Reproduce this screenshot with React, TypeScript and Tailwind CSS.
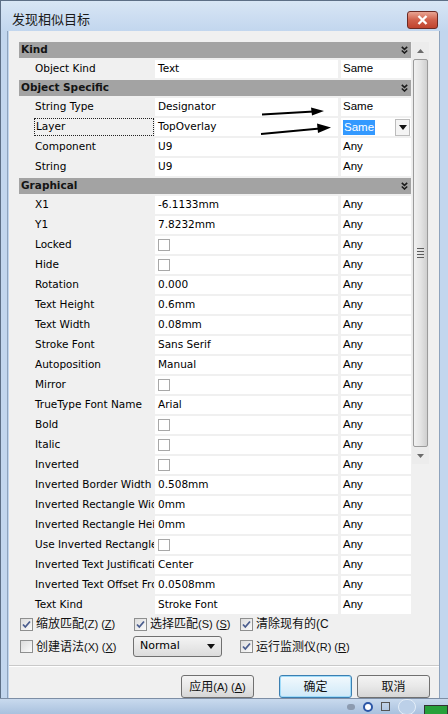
import type { ReactNode } from 'react';

// ── Data ──────────────────────────────────────────────────────────────────────

type Row = { name: string; value?: string; check?: boolean; match: string; focus?: boolean };
type Section = { title: string; rows: Row[] };

const sections: Section[] = [
  { title: 'Kind', rows: [{ name: 'Object Kind', value: 'Text', match: 'Same' }] },
  {
    title: 'Object Specific',
    rows: [
      { name: 'String Type', value: 'Designator', match: 'Same' },
      { name: 'Layer', value: 'TopOverlay', match: 'Same', focus: true },
      { name: 'Component', value: 'U9', match: 'Any' },
      { name: 'String', value: 'U9', match: 'Any' },
    ],
  },
  {
    title: 'Graphical',
    rows: [
      { name: 'X1', value: '-6.1133mm', match: 'Any' },
      { name: 'Y1', value: '7.8232mm', match: 'Any' },
      { name: 'Locked', check: true, match: 'Any' },
      { name: 'Hide', check: true, match: 'Any' },
      { name: 'Rotation', value: '0.000', match: 'Any' },
      { name: 'Text Height', value: '0.6mm', match: 'Any' },
      { name: 'Text Width', value: '0.08mm', match: 'Any' },
      { name: 'Stroke Font', value: 'Sans Serif', match: 'Any' },
      { name: 'Autoposition', value: 'Manual', match: 'Any' },
      { name: 'Mirror', check: true, match: 'Any' },
      { name: 'TrueType Font Name', value: 'Arial', match: 'Any' },
      { name: 'Bold', check: true, match: 'Any' },
      { name: 'Italic', check: true, match: 'Any' },
      { name: 'Inverted', check: true, match: 'Any' },
      { name: 'Inverted Border Width', value: '0.508mm', match: 'Any' },
      { name: 'Inverted Rectangle Width', value: '0mm', match: 'Any' },
      { name: 'Inverted Rectangle Height', value: '0mm', match: 'Any' },
      { name: 'Use Inverted Rectangle', check: true, match: 'Any' },
      { name: 'Inverted Text Justification', value: 'Center', match: 'Any' },
      { name: 'Inverted Text Offset From Border', value: '0.0508mm', match: 'Any' },
      { name: 'Text Kind', value: 'Stroke Font', match: 'Any' },
    ],
  },
];

const tahoma = "font-['DejaVu_Sans',sans-serif] text-[10.5px]";
const cjk = "font-['Liberation_Sans','Noto_Sans_CJK_SC',sans-serif]";

// ── Small drawings ────────────────────────────────────────────────────────────

function DoubleChevron() {
  return (
    <svg width="7" height="8" viewBox="0 0 7 8" className="shrink-0">
      <path d="M0.8 0.8 L3.5 3.3 L6.2 0.8 M0.8 4.5 L3.5 7 L6.2 4.5" fill="none" stroke="#1b1b1b" strokeWidth="1.6" />
    </svg>
  );
}

function WinCheck({ checked }: { checked: boolean }) {
  return (
    <div className="flex h-[13px] w-[13px] shrink-0 items-center justify-center border border-[#8e8f8f] bg-gradient-to-br from-[#dcdcdc] to-[#fbfbfb]">
      {checked && (
        <svg width="11" height="11" viewBox="0 0 11 11">
          <path d="M2 5.5 L4.3 8 L9 2.5" fill="none" stroke="#4a5d8e" strokeWidth="1.8" />
        </svg>
      )}
    </div>
  );
}

function Label({ children }: { children: ReactNode }) {
  return <span className={`${cjk} whitespace-nowrap text-[12px] text-[#111]`}>{children}</span>;
}

// ── Property grid ─────────────────────────────────────────────────────────────

function GridRow({ row }: { row: Row }) {
  return (
    <div className="flex h-[20px] py-px">
      <div className={`w-[135px] overflow-hidden whitespace-nowrap pl-[15px] ${tahoma} text-black`}>
        <div className={`flex h-full items-center pl-px ${row.focus ? 'border border-dotted border-[#222]' : ''}`}>
          {row.name}
        </div>
      </div>
      <div className={`ml-px flex w-[183px] items-center bg-white pl-[3px] ${tahoma} text-black`}>
        {row.check ? <div className="h-[12px] w-[12px] border border-[#a8a8a8] bg-white" /> : row.value}
      </div>
      {row.focus ? (
        <div className="ml-[3px] flex flex-1 items-center justify-between bg-white pl-[2px] pr-px">
          <span className="bg-[#3399ff] px-px font-['Liberation_Sans',sans-serif] text-[11.5px] leading-[15px] text-white">{row.match}</span>
          <div className="flex h-[17px] w-[15px] items-center justify-center border border-[#bcbcbc] bg-[#f4f4f4]">
            <svg width="8" height="5" viewBox="0 0 8 5">
              <path d="M0 0 H8 L4 5 Z" fill="#111" />
            </svg>
          </div>
        </div>
      ) : (
        <div className="ml-[3px] flex flex-1 items-center bg-white pl-[2px] font-['Liberation_Sans',sans-serif] text-[11.5px] text-black">
          {row.match}
        </div>
      )}
    </div>
  );
}

function Scrollbar() {
  return (
    <div className="flex w-[17px] flex-col bg-[#ececec]">
      <div className="flex h-[17px] items-center justify-center">
        <svg width="7" height="4" viewBox="0 0 7 4">
          <path d="M0 4 L3.5 0 L7 4 Z" fill="#6b6b6b" />
        </svg>
      </div>
      <div className="mx-px flex h-[388px] items-center justify-center rounded-[2px] border border-[#9b9b9b] bg-gradient-to-r from-[#f1f1f1] via-[#e4e4e4] to-[#cfcfcf]">
        <div className="flex flex-col gap-[2px]">
          <div className="h-px w-[7px] bg-[#5c5c5c]" />
          <div className="h-px w-[7px] bg-[#5c5c5c]" />
          <div className="h-px w-[7px] bg-[#5c5c5c]" />
          <div className="h-px w-[7px] bg-[#5c5c5c]" />
        </div>
      </div>
      <div className="flex-1" />
      <div className="flex h-[17px] items-center justify-center">
        <svg width="7" height="4" viewBox="0 0 7 4">
          <path d="M0 0 H7 L3.5 4 Z" fill="#6b6b6b" />
        </svg>
      </div>
    </div>
  );
}

function PropertyGrid() {
  return (
    <div className="flex h-[573px] gap-px overflow-hidden">
      <div className="w-[392px] overflow-hidden">
        {sections.map((s) => (
          <div key={s.title}>
            <div className="h-[18px] py-px">
              <div className="flex h-full items-center justify-between bg-[#a3a3a3] pl-[2px] pr-[3px]">
                <span className="font-['DejaVu_Sans',sans-serif] text-[10.5px] font-bold text-[#141414]">{s.title}</span>
                <DoubleChevron />
              </div>
            </div>
            {s.rows.map((r) => (
              <GridRow key={r.name} row={r} />
            ))}
          </div>
        ))}
      </div>
      <div className="pt-px">
        <Scrollbar />
      </div>
    </div>
  );
}

// ── Bottom area ───────────────────────────────────────────────────────────────

function Accel({ text, k }: { text: string; k: string }) {
  return (
    <Label>
      {text}
      <span className="text-[11px]">
        ({k}) (<span className="underline">{k}</span>)
      </span>
    </Label>
  );
}

function WinButton({ children, primary }: { children: ReactNode; primary?: boolean }) {
  return (
    <div
      className={`flex h-[23px] w-[73px] items-center justify-center rounded-[3px] border ${
        primary
          ? 'border-[#3c7fb1] bg-gradient-to-b from-[#f2f9fd] to-[#cfe9f8] shadow-[inset_0_0_0_1px_#9fdbf9]'
          : 'border-[#707070] bg-gradient-to-b from-[#f4f4f4] via-[#e8e8e8] to-[#d6d6d6]'
      }`}
    >
      <Label>{children}</Label>
    </div>
  );
}

export default function App() {
  return (
    <div className="relative flex h-[714px] w-[448px] flex-col overflow-hidden bg-[#bcd1ea]">
      {/* title bar */}
      <div className="flex h-[31px] shrink-0 items-start justify-between border-l border-t border-[#5d6f86] bg-gradient-to-b from-[#d8e6f5] to-[#c2d6ee] pl-[11px] pr-[10px]">
        <span className={`${cjk} mt-[9px] text-[13px] text-[#1a1a1a]`}>发现相似目标</span>
        <div className="mt-[10px] flex h-[18px] w-[31px] items-center justify-center rounded-[3px] border border-[#6b2a24] bg-gradient-to-b from-[#e8a493] via-[#d0604b] to-[#c0432e]">
          <svg width="11" height="10" viewBox="0 0 11 10">
            <path d="M1.5 1 L9.5 9 M9.5 1 L1.5 9" stroke="white" strokeWidth="2.4" />
          </svg>
        </div>
      </div>

      <div className="flex min-h-0 flex-1">
        <div className="w-[9px] shrink-0 border-l border-[#5d6f86] bg-[#c2d6ee]">
          <div className="ml-[6px] h-full w-px bg-[#8ea3bd]" />
        </div>

        {/* client area */}
        <div className="flex w-[430px] flex-col bg-[#f0f0f0]">
          <div className="pl-[10px] pt-[10px]">
            <PropertyGrid />
          </div>

          <div className="mt-[2px] flex h-[16px] items-center pl-[11px]">
            <div className="flex w-[114px] items-center gap-[3px]">
              <WinCheck checked />
              <Accel text="缩放匹配" k="Z" />
            </div>
            <div className="flex w-[106px] items-center gap-[3px]">
              <WinCheck checked />
              <Accel text="选择匹配" k="S" />
            </div>
            <div className="flex items-center gap-[3px]">
              <WinCheck checked />
              <Label>清除现有的(C</Label>
            </div>
          </div>

          <div className="mt-[4px] flex h-[21px] items-center pl-[11px]">
            <div className="flex w-[113px] items-center gap-[3px]">
              <WinCheck checked={false} />
              <Accel text="创建语法" k="X" />
            </div>
            <div className="mr-[18px] flex h-[21px] w-[89px] items-center justify-between rounded-[3px] border border-[#707070] bg-gradient-to-b from-[#f4f4f4] to-[#dcdcdc] pl-[6px] pr-[6px]">
              <span className={`${tahoma} text-[11px] text-black`}>Normal</span>
              <svg width="8" height="5" viewBox="0 0 8 5">
                <path d="M0 0 H8 L4 5 Z" fill="#111" />
              </svg>
            </div>
            <div className="flex items-center gap-[3px]">
              <WinCheck checked />
              <Accel text="运行监测仪" k="R" />
            </div>
          </div>

          <div className="mt-[8px] border-t border-[#c9c9c9] shadow-[0_1px_0_#ffffff]" />

          <div className="flex flex-1 items-end justify-end pr-[9px]">
            <WinButton>
              应用<span className="text-[11px]">(A) (<span className="underline">A</span>)</span>
            </WinButton>
            <div className="w-[25px]" />
            <WinButton primary>确定</WinButton>
            <div className="w-[5px]" />
            <WinButton>取消</WinButton>
          </div>
        </div>

        <div className="w-[9px] shrink-0 bg-[#c2d6ee]">
          <div className="h-full w-px bg-[#8ea3bd]" />
        </div>
      </div>

      {/* taskbar strip */}
      <div className="flex h-[16px] shrink-0 items-center justify-end gap-[8px] border-t border-[#7d8ea5] bg-gradient-to-b from-[#c9daee] to-[#a9c1de] pr-0">
        <div className="h-[6px] w-[8px] rounded-sm bg-[#8c9bb0]" />
        <div className="h-[10px] w-[10px] rounded-full border-2 border-[#2b56a6] bg-white" />
        <div className="h-[9px] w-[9px] border border-[#555]" />
        <div className="h-[16px] w-[18px] rounded-full border border-[#e4eef8] bg-[#bcd0e8]" />
        <div className="mt-[6px] h-[10px] w-[24px] border border-[#333] bg-[#27a03a]" />
      </div>

      {/* annotation arrows */}
      <svg className="pointer-events-none absolute left-0 top-0" width="448" height="714">
        <path d="M262 114.5 L314 111.5" stroke="#000" strokeWidth="2" />
        <path d="M311 107.5 L324 111 L312 115.5 Z" fill="#000" />
        <path d="M261 134 L320 128.5" stroke="#000" strokeWidth="2" />
        <path d="M317 123.5 L331 127.5 L318 133 Z" fill="#000" />
      </svg>
    </div>
  );
}
